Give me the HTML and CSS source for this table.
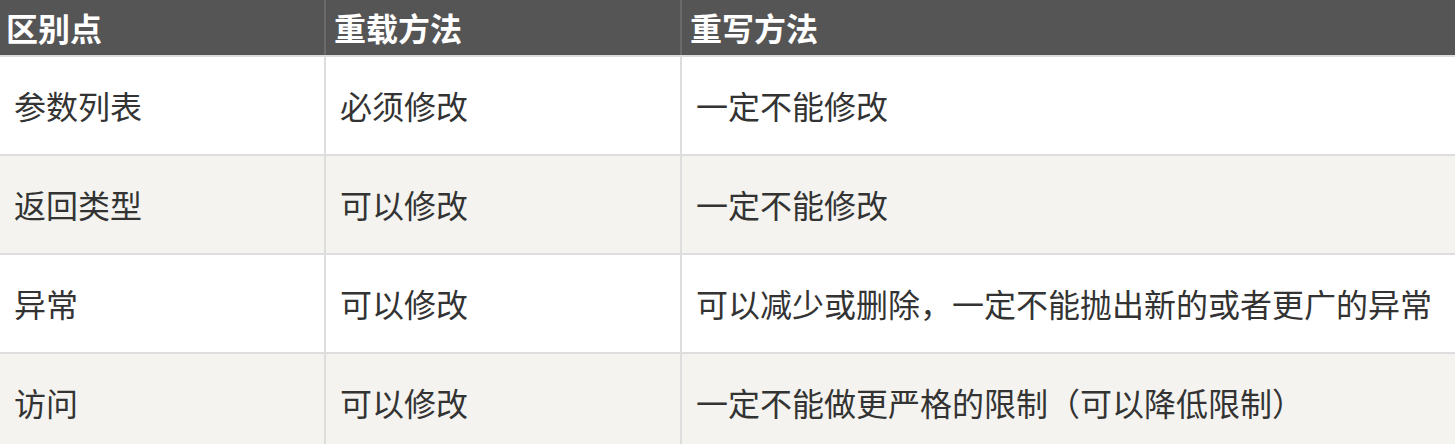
FILE: index.html
```html
<!DOCTYPE html>
<html lang="zh-CN">
<head>
<meta charset="utf-8">
<title>重载与重写</title>
<link rel="stylesheet" href="styles.css">
</head>
<body>
<table class="cmp">
  <colgroup>
    <col class="c1">
    <col class="c2">
    <col class="c3">
  </colgroup>
  <thead>
    <tr><th>区别点</th><th>重载方法</th><th>重写方法</th></tr>
  </thead>
  <tbody>
    <tr><td>参数列表</td><td>必须修改</td><td>一定不能修改</td></tr>
    <tr><td>返回类型</td><td>可以修改</td><td>一定不能修改</td></tr>
    <tr><td>异常</td><td>可以修改</td><td>可以减少或删除，一定不能抛出新的或者更广的异常</td></tr>
    <tr><td>访问</td><td>可以修改</td><td>一定不能做更严格的限制（可以降低限制）</td></tr>
  </tbody>
</table>
</body>
</html>
```
FILE: styles.css
```css
html, body {
  margin: 0;
  padding: 0;
  background: #ffffff;
  overflow: hidden;
}
body {
  font-family: "Microsoft YaHei", "Noto Sans CJK SC", "Noto Sans", sans-serif;
  color: #333333;
}
.cmp {
  border-collapse: collapse;
  table-layout: fixed;
  width: 1459px;
  margin-left: -2px;
  font-size: 32px;
  line-height: 48px;
}
.c1 { width: 326px; }
.c2 { width: 356px; }
.c3 { width: 777px; }
.cmp th {
  background: #555555;
  color: #ffffff;
  font-weight: bold;
  text-align: left;
  padding: 3px 8px 4px 8px;
  border: 2px solid #6a6a6a;
  border-top: 0;
  border-bottom: 2px solid #dddddd;
}
.cmp th:first-child {
  padding-left: 6px;
}
.cmp td {
  padding: 24px 14px 25px 14px;
  border: 2px solid #dddddd;
  white-space: nowrap;
}
.cmp tbody tr:nth-child(even) td {
  background: #f4f3f0;
}
```
